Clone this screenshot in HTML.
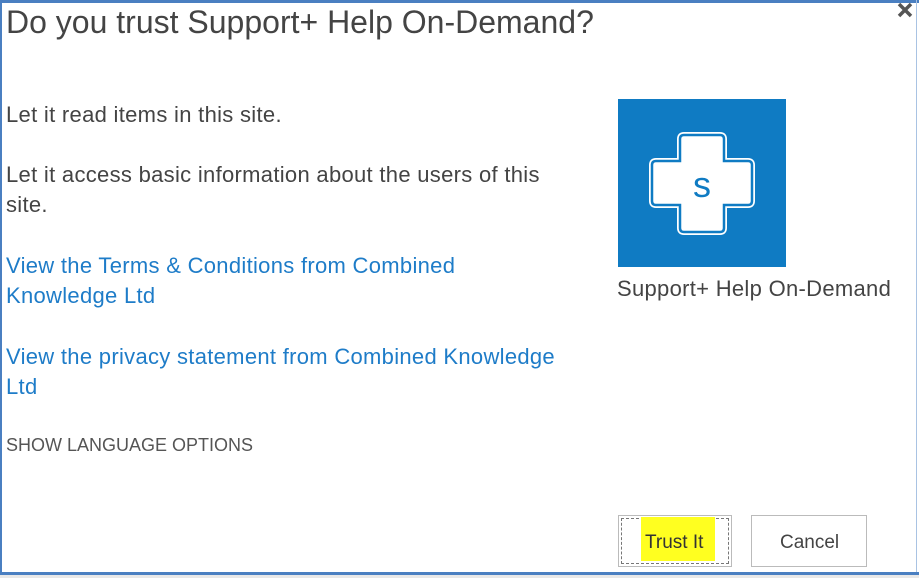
<!DOCTYPE html>
<html><head><style>
body{margin:0;width:919px;height:578px;background:#fff;position:relative;overflow:hidden;font-family:"Liberation Sans",sans-serif;}
.t{position:absolute;white-space:nowrap;}
.b{color:#444;font-size:22px;letter-spacing:0.3px;}
.l{color:#1e7cc8;font-size:22px;letter-spacing:0.3px;}
</style></head><body>
<div style="position:absolute;left:0;top:0;width:919px;height:3px;background:#4a7fc1"></div>
<div style="position:absolute;left:0;top:0;width:2px;height:576px;background:#4a7fc1"></div>
<div style="position:absolute;left:916px;top:0;width:1px;height:576px;background:#a9c3e3"></div>
<div style="position:absolute;left:0;top:572px;width:919px;height:3px;background:#4a7fc1"></div>
<div style="position:absolute;left:0;top:575px;width:919px;height:3px;background:#e8e8e8"></div>
<div class="t" style="left:6px;top:4px;font-size:32px;color:#444">Do you trust Support+ Help On-Demand?</div>
<svg style="position:absolute;left:896px;top:3px" width="18" height="16"><path d="M3 1L15 13M15 1L3 13" stroke="#555" stroke-width="3.5"/></svg>
<div class="t b" style="left:6px;top:102px">Let it read items in this site.</div>
<div class="t b" style="left:6px;top:162px">Let it access basic information about the users of this</div>
<div class="t b" style="left:6px;top:192px">site.</div>
<div class="t l" style="left:6px;top:253px">View the Terms &amp; Conditions from Combined</div>
<div class="t l" style="left:6px;top:283px">Knowledge Ltd</div>
<div class="t l" style="left:6px;top:344px">View the privacy statement from Combined Knowledge</div>
<div class="t l" style="left:6px;top:374px">Ltd</div>
<div class="t" style="left:6px;top:435px;font-size:18px;color:#555">SHOW LANGUAGE OPTIONS</div>
<div style="position:absolute;left:618px;top:99px;width:168px;height:168px;background:#0f7bc3"></div>
<svg style="position:absolute;left:618px;top:99px" width="168" height="168">
<path d="M62 62 V40 q0-4 4-4 h36 q4 0 4 4 V62 H130 q4 0 4 4 v36 q0 4-4 4 H106 V129 q0 4-4 4 h-36 q-4 0-4-4 V106 H38 q-4 0-4-4 v-36 q0-4 4-4z" fill="#fff" stroke="#fff" stroke-width="6" stroke-linejoin="round"/>
<path d="M62 62 V40 q0-4 4-4 h36 q4 0 4 4 V62 H130 q4 0 4 4 v36 q0 4-4 4 H106 V129 q0 4-4 4 h-36 q-4 0-4-4 V106 H38 q-4 0-4-4 v-36 q0-4 4-4z" fill="none" stroke="#0f7bc3" stroke-width="2.5"/>
<text x="84" y="98" text-anchor="middle" font-family="Liberation Sans" font-size="36" fill="#0f7bc3">s</text>
</svg>
<div class="t" style="left:617px;top:276px;font-size:22px;color:#444;letter-spacing:0.3px">Support+ Help On-Demand</div>
<div style="position:absolute;left:618px;top:515px;width:114px;height:52px;border:1px solid #bbb;box-sizing:border-box"></div>
<div style="position:absolute;left:621px;top:518px;width:108px;height:46px;border:1px dashed #777;box-sizing:border-box"></div>
<div style="position:absolute;left:641px;top:517px;width:74px;height:44px;background:#ffff20"></div>
<div class="t" style="left:645px;top:532px;font-size:19px;color:#333">Trust It</div>
<div style="position:absolute;left:751px;top:515px;width:116px;height:52px;border:1px solid #bbb;box-sizing:border-box"></div>
<div class="t" style="left:780px;top:532px;font-size:19px;color:#444">Cancel</div>
</body></html>
